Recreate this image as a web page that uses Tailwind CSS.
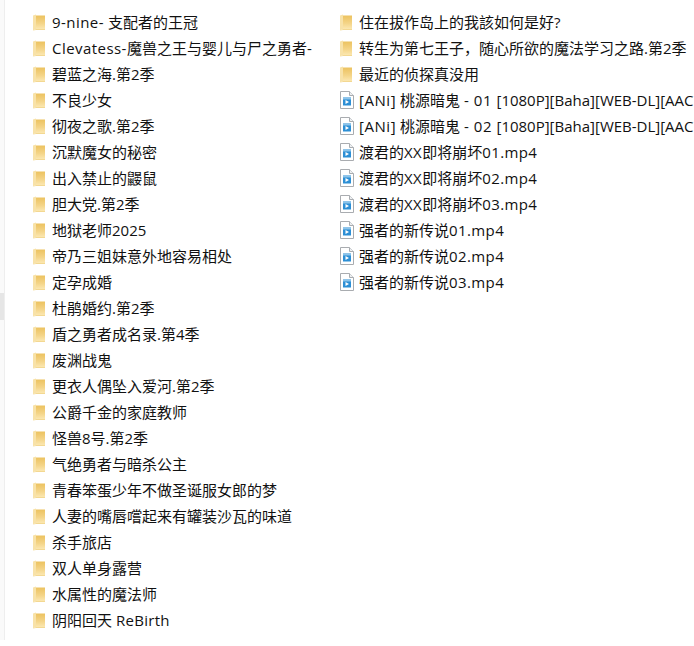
<!DOCTYPE html>
<html lang="zh-CN">
<head>
    <meta charset="UTF-8">
    <title>文件列表</title>
    <script src="https://cdn.jsdelivr.net/npm/@tailwindcss/browser@4"></script>
</head>
<body class="bg-white overflow-hidden">
    <svg class="absolute w-0 h-0">
        <defs>
            <linearGradient id="folderBody" x1="0" y1="0" x2="0" y2="1">
                <stop offset="0" stop-color="#ecc25f"/>
                <stop offset="0.55" stop-color="#f4d487"/>
                <stop offset="1" stop-color="#fce9b4"/>
            </linearGradient>
        </defs>
        <symbol id="folder" viewBox="0 0 12 17">
            <path d="M0 1.5 L3 0.5 V15 L0 16.5 Z" fill="#f8e2a8"/>
            <path d="M3 1.5 H12 V15.5 H3 Z" fill="url(#folderBody)"/>
            <path d="M0 16.5 L3 15 H12 V16 H3 Z" fill="#f3d892"/>
        </symbol>
        <symbol id="video" viewBox="0 0 14 18">
            <path d="M0.5 0.5 H9.5 L13.5 4.5 V17.5 H0.5 Z" fill="#ffffff" stroke="#a9acb0"/>
            <path d="M9.5 0.5 V4.5 H13.5" fill="#eef0f2" stroke="#a9acb0"/>
            <rect x="3" y="6.5" width="8" height="8" fill="#2d8fd5"/>
            <rect x="3" y="6.5" width="8" height="2" fill="#8cc4ea"/>
            <path d="M5.5 9 L9 11 L5.5 13 Z" fill="#ffffff"/>
        </symbol>
    </svg>

    <div class="w-[694px] h-[646px] flex font-['Open_Sans','Noto_Sans_CJK_SC',sans-serif] text-[15px] text-[#111111] overflow-hidden">
        <!-- nav pane edge -->
        <div class="w-[5px] h-[640px] shrink-0 bg-[#fafafa] border-r border-[#eeeeee] pt-[293px]">
            <div class="w-[4px] h-[27px] bg-[#e6e6e6]"></div>
        </div>

        <!-- left column -->
        <ul class="w-[307px] shrink-0 pt-[9px] pl-[28px]">
            <li class="h-[26px] flex items-center gap-[7px] whitespace-nowrap"><svg class="w-[12px] h-[17px] shrink-0"><use href="#folder"/></svg><span><span class="tracking-[0.45px]">9-nine-</span> 支配者的王冠</span></li>
            <li class="h-[26px] flex items-center gap-[7px] whitespace-nowrap"><svg class="w-[12px] h-[17px] shrink-0"><use href="#folder"/></svg><span><span class="tracking-[0.45px]">Clevatess-</span>魔兽之王与婴儿与尸之勇者-</span></li>
            <li class="h-[26px] flex items-center gap-[7px] whitespace-nowrap"><svg class="w-[12px] h-[17px] shrink-0"><use href="#folder"/></svg><span>碧蓝之海.第2季</span></li>
            <li class="h-[26px] flex items-center gap-[7px] whitespace-nowrap"><svg class="w-[12px] h-[17px] shrink-0"><use href="#folder"/></svg><span>不良少女</span></li>
            <li class="h-[26px] flex items-center gap-[7px] whitespace-nowrap"><svg class="w-[12px] h-[17px] shrink-0"><use href="#folder"/></svg><span>彻夜之歌.第2季</span></li>
            <li class="h-[26px] flex items-center gap-[7px] whitespace-nowrap"><svg class="w-[12px] h-[17px] shrink-0"><use href="#folder"/></svg><span>沉默魔女的秘密</span></li>
            <li class="h-[26px] flex items-center gap-[7px] whitespace-nowrap"><svg class="w-[12px] h-[17px] shrink-0"><use href="#folder"/></svg><span>出入禁止的鼹鼠</span></li>
            <li class="h-[26px] flex items-center gap-[7px] whitespace-nowrap"><svg class="w-[12px] h-[17px] shrink-0"><use href="#folder"/></svg><span>胆大党.第2季</span></li>
            <li class="h-[26px] flex items-center gap-[7px] whitespace-nowrap"><svg class="w-[12px] h-[17px] shrink-0"><use href="#folder"/></svg><span>地狱老师2025</span></li>
            <li class="h-[26px] flex items-center gap-[7px] whitespace-nowrap"><svg class="w-[12px] h-[17px] shrink-0"><use href="#folder"/></svg><span>帝乃三姐妹意外地容易相处</span></li>
            <li class="h-[26px] flex items-center gap-[7px] whitespace-nowrap"><svg class="w-[12px] h-[17px] shrink-0"><use href="#folder"/></svg><span>定孕成婚</span></li>
            <li class="h-[26px] flex items-center gap-[7px] whitespace-nowrap"><svg class="w-[12px] h-[17px] shrink-0"><use href="#folder"/></svg><span>杜鹃婚约.第2季</span></li>
            <li class="h-[26px] flex items-center gap-[7px] whitespace-nowrap"><svg class="w-[12px] h-[17px] shrink-0"><use href="#folder"/></svg><span>盾之勇者成名录.第4季</span></li>
            <li class="h-[26px] flex items-center gap-[7px] whitespace-nowrap"><svg class="w-[12px] h-[17px] shrink-0"><use href="#folder"/></svg><span>废渊战鬼</span></li>
            <li class="h-[26px] flex items-center gap-[7px] whitespace-nowrap"><svg class="w-[12px] h-[17px] shrink-0"><use href="#folder"/></svg><span>更衣人偶坠入爱河.第2季</span></li>
            <li class="h-[26px] flex items-center gap-[7px] whitespace-nowrap"><svg class="w-[12px] h-[17px] shrink-0"><use href="#folder"/></svg><span>公爵千金的家庭教师</span></li>
            <li class="h-[26px] flex items-center gap-[7px] whitespace-nowrap"><svg class="w-[12px] h-[17px] shrink-0"><use href="#folder"/></svg><span>怪兽8号.第2季</span></li>
            <li class="h-[26px] flex items-center gap-[7px] whitespace-nowrap"><svg class="w-[12px] h-[17px] shrink-0"><use href="#folder"/></svg><span>气绝勇者与暗杀公主</span></li>
            <li class="h-[26px] flex items-center gap-[7px] whitespace-nowrap"><svg class="w-[12px] h-[17px] shrink-0"><use href="#folder"/></svg><span>青春笨蛋少年不做圣诞服女郎的梦</span></li>
            <li class="h-[26px] flex items-center gap-[7px] whitespace-nowrap"><svg class="w-[12px] h-[17px] shrink-0"><use href="#folder"/></svg><span>人妻的嘴唇嚐起来有罐装沙瓦的味道</span></li>
            <li class="h-[26px] flex items-center gap-[7px] whitespace-nowrap"><svg class="w-[12px] h-[17px] shrink-0"><use href="#folder"/></svg><span>杀手旅店</span></li>
            <li class="h-[26px] flex items-center gap-[7px] whitespace-nowrap"><svg class="w-[12px] h-[17px] shrink-0"><use href="#folder"/></svg><span>双人单身露营</span></li>
            <li class="h-[26px] flex items-center gap-[7px] whitespace-nowrap"><svg class="w-[12px] h-[17px] shrink-0"><use href="#folder"/></svg><span>水属性的魔法师</span></li>
            <li class="h-[26px] flex items-center gap-[7px] whitespace-nowrap"><svg class="w-[12px] h-[17px] shrink-0"><use href="#folder"/></svg><span>阴阳回天 <span class="tracking-[0.3px]">ReBirth</span></span></li>
        </ul>

        <!-- right column -->
        <ul class="flex-1 min-w-0 pt-[9px] pl-[28px]">
            <li class="h-[26px] flex items-center gap-[7px] whitespace-nowrap"><svg class="w-[12px] h-[17px] shrink-0"><use href="#folder"/></svg><span>住在拔作岛上的我該如何是好?</span></li>
            <li class="h-[26px] flex items-center gap-[7px] whitespace-nowrap"><svg class="w-[12px] h-[17px] shrink-0"><use href="#folder"/></svg><span>转生为第七王子，随心所欲的魔法学习之路.第2季</span></li>
            <li class="h-[26px] flex items-center gap-[7px] whitespace-nowrap"><svg class="w-[12px] h-[17px] shrink-0"><use href="#folder"/></svg><span>最近的侦探真没用</span></li>
            <li class="h-[26px] flex items-center gap-[5px] whitespace-nowrap"><svg class="w-[14px] h-[18px] shrink-0"><use href="#video"/></svg><span><span class="tracking-[0.55px]">[ANi]</span> 桃源暗鬼 <span class="tracking-[0.55px]">- 01 </span><span>[1080P][Baha][WEB-DL][AAC</span></span></li>
            <li class="h-[26px] flex items-center gap-[5px] whitespace-nowrap"><svg class="w-[14px] h-[18px] shrink-0"><use href="#video"/></svg><span><span class="tracking-[0.55px]">[ANi]</span> 桃源暗鬼 <span class="tracking-[0.55px]">- 02 </span><span>[1080P][Baha][WEB-DL][AAC</span></span></li>
            <li class="h-[26px] flex items-center gap-[5px] whitespace-nowrap"><svg class="w-[14px] h-[18px] shrink-0"><use href="#video"/></svg><span>渡君的<span class="tracking-[0.4px]">XX</span>即将崩坏<span class="tracking-[0.4px]">01.mp4</span></span></li>
            <li class="h-[26px] flex items-center gap-[5px] whitespace-nowrap"><svg class="w-[14px] h-[18px] shrink-0"><use href="#video"/></svg><span>渡君的<span class="tracking-[0.4px]">XX</span>即将崩坏<span class="tracking-[0.4px]">02.mp4</span></span></li>
            <li class="h-[26px] flex items-center gap-[5px] whitespace-nowrap"><svg class="w-[14px] h-[18px] shrink-0"><use href="#video"/></svg><span>渡君的<span class="tracking-[0.4px]">XX</span>即将崩坏<span class="tracking-[0.4px]">03.mp4</span></span></li>
            <li class="h-[26px] flex items-center gap-[5px] whitespace-nowrap"><svg class="w-[14px] h-[18px] shrink-0"><use href="#video"/></svg><span>强者的新传说<span class="tracking-[0.4px]">01.mp4</span></span></li>
            <li class="h-[26px] flex items-center gap-[5px] whitespace-nowrap"><svg class="w-[14px] h-[18px] shrink-0"><use href="#video"/></svg><span>强者的新传说<span class="tracking-[0.4px]">02.mp4</span></span></li>
            <li class="h-[26px] flex items-center gap-[5px] whitespace-nowrap"><svg class="w-[14px] h-[18px] shrink-0"><use href="#video"/></svg><span>强者的新传说<span class="tracking-[0.4px]">03.mp4</span></span></li>
        </ul>
    </div>
</body>
</html>
